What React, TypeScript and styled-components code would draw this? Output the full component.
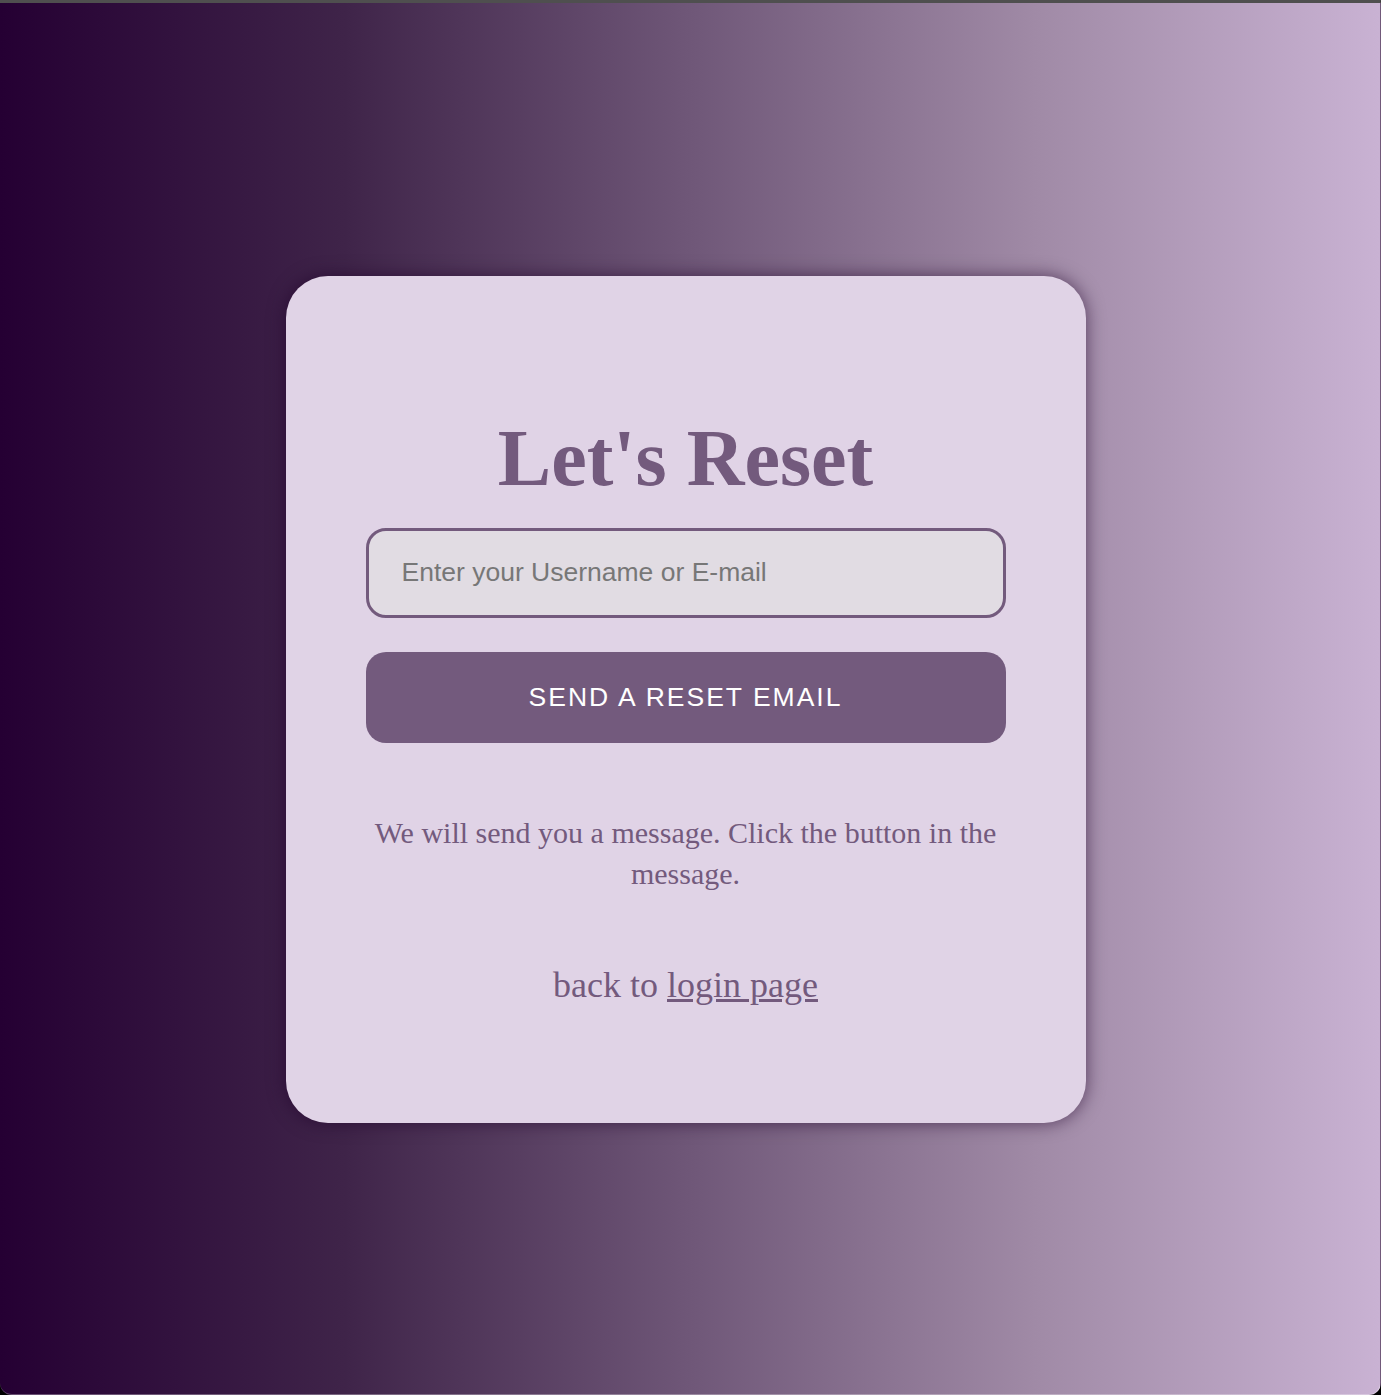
import styled, { createGlobalStyle } from 'styled-components';

const GlobalStyle = createGlobalStyle`
    html, body {
        margin: 0;
        padding: 0;
        background: #000;
    }
    * {
        box-sizing: border-box;
    }
`;

const Screen = styled.div`
    height: 1395px;
    width: 1381px;
    border-top: 3px solid #4f4f4f;
    border-right: 1px solid rgba(255, 255, 255, 0.35);
    border-bottom: 1px solid rgba(255, 255, 255, 0.3);
    border-radius: 0 0 12px 12px;
    overflow: hidden;
    background: linear-gradient(to right, #250033 0%, #3f2449 25%, #6f5778 50%, #a08aa6 75%, #c9b2d3 100%);
    display: flex;
    justify-content: center;
    align-items: center;
    font-family: 'Liberation Serif', 'Times New Roman', serif;
`;

const Card = styled.div`
    width: 800px;
    margin-left: -9px;
    margin-top: 1px;
    padding: 136px 80px 117px;
    background-color: #e0d3e6;
    border-radius: 42px;
    box-shadow: 0 0 18px rgba(30, 0, 40, 0.6);
    display: flex;
    flex-direction: column;
    align-items: stretch;
    text-align: center;
`;

const Title = styled.h1`
    margin: 0 0 24px;
    font-size: 80px;
    line-height: 92px;
    font-weight: 700;
    color: #735a7d;
`;

const Input = styled.input`
    height: 90px;
    width: 100%;
    padding: 0 33px;
    border: 3px solid #735a7d;
    border-radius: 20px;
    background-color: #e1dce3;
    font-family: 'Liberation Sans', Arial, sans-serif;
    font-size: 26.5px;
    color: #333;
    outline: none;

    &::placeholder {
        color: #777;
    }
`;

const Button = styled.button`
    margin-top: 34px;
    height: 91px;
    width: 100%;
    border: none;
    border-radius: 20px;
    background-color: #735a7d;
    color: #fff;
    font-family: 'Liberation Sans', Arial, sans-serif;
    font-size: 26.5px;
    letter-spacing: 2px;
    text-transform: uppercase;
    cursor: pointer;
`;

const Message = styled.p`
    margin: 69px 0 71px;
    font-size: 30px;
    line-height: 41px;
    color: #735a7d;
`;

const BackLine = styled.p`
    margin: 0;
    font-size: 36px;
    line-height: 41px;
    color: #735a7d;
`;

const LoginLink = styled.a`
    color: #735a7d;
    text-decoration: underline;
`;

export default function App() {
    return (
        <>
            <GlobalStyle />
            <Screen>
                <Card>
                    <Title>Let's Reset</Title>
                    <Input type='text' placeholder='Enter your Username or E-mail' />
                    <Button type='button'>Send a reset email</Button>
                    <Message>We will send you a message. Click the button in the message.</Message>
                    <BackLine>
                        back to <LoginLink href='#'>login page</LoginLink>
                    </BackLine>
                </Card>
            </Screen>
        </>
    );
}
